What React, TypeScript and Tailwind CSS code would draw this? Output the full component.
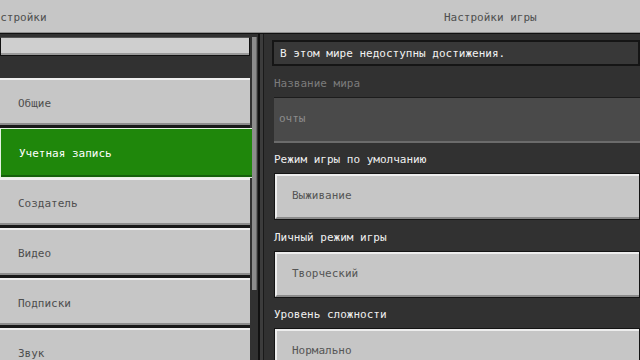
export default function App() {
  const items = ["Общие", "Учетная запись", "Создатель", "Видео", "Подписки", "Звук"];
  const active = "Учетная запись";

  return (
    <div className="w-[640px] h-[360px] overflow-hidden bg-[#313131] flex flex-col font-['DejaVu_Sans_Mono',monospace] text-[11px]">
      {/* Header */}
      <header className="h-[33px] shrink-0 bg-[#c6c6c6] border-b border-b-[#8f8f8f] flex items-center pt-[5px] text-[#4f4f4f]">
        <div className="w-[264px] shrink-0 overflow-hidden">
          <span className="block -ml-[13px]">Настройки</span>
        </div>
        <div className="flex-1 pl-[180px]">Настройки игры</div>
      </header>
      <div className="h-[1px] shrink-0 bg-[#111]" />

      <div className="flex flex-1 min-h-0">
        {/* Left panel */}
        <aside className="w-[258px] shrink-0 flex">
          <div className="w-[251px] shrink-0 flex flex-col pt-[3px]">
            <div className="h-[19px] w-[250px] shrink-0 bg-[#cfcfcf] border border-[#111] border-t-[#555] shadow-[inset_0_-2px_0_#9a9a9a]" />
            <div className="mt-[22px] shrink-0 flex flex-col">
              {items.map((label) =>
                label === active ? (
                  <div
                    key={label}
                    className="h-[50px] w-[253px] shrink-0 bg-[#1f870b] border border-[#e6f2e2] shadow-[inset_0_-2px_0_#14600a] flex items-center pl-[18px] pt-[2px] text-white"
                  >
                    {label}
                  </div>
                ) : (
                  <div
                    key={label}
                    className="h-[50px] w-[250px] shrink-0 bg-[#c6c6c6] border-t-2 border-t-[#efefef] border-b-[3px] border-b-[#181818] shadow-[inset_0_-2px_0_#8d8d8d] flex items-center pl-[18px] pt-[3px] text-[#4e4e4e]"
                  >
                    {label}
                  </div>
                )
              )}
            </div>
          </div>
          <div className="w-[7px] shrink-0 pt-[3px] pl-[1px]">
            <div className="h-[253px] w-[5px] bg-[#8c8c8c] shadow-[inset_-1px_0_0_#6a6a6a]" />
          </div>
        </aside>

        {/* Divider */}
        <div className="w-[6px] shrink-0 flex">
          <div className="w-[2px] bg-[#111]" />
          <div className="w-[3px] bg-[#3c3c3c]" />
          <div className="w-[1px] bg-[#1a1a1a]" />
        </div>

        {/* Right panel */}
        <main className="flex-1 min-w-0 flex flex-col pt-[6px] pl-[8px]">
          <div className="h-[26px] shrink-0 bg-[#383838] border-2 border-[#151515] flex items-center pl-[6px] pt-[2px] text-[#f2f2f2]">
            В этом мире недоступны достижения.
          </div>

          <div className="mt-[11px] h-[14px] shrink-0 pl-[2px] leading-[14px] text-[#7c7c7c]">Название мира</div>
          <div className="mt-[6px] ml-[2px] h-[46px] shrink-0 bg-[#4a4a4a] border-t border-t-[#1c1c1c] border-b-2 border-b-[#6b6b6b] flex items-center pl-[5px] text-[#8c8c8c]">
            очты
          </div>

          <div className="mt-[10px] h-[14px] shrink-0 pl-[2px] leading-[14px] text-[#f0f0f0]">Режим игры по умолчанию</div>
          <Dropdown value="Выживание" />

          <div className="mt-[11px] h-[14px] shrink-0 pl-[2px] leading-[14px] text-[#f0f0f0]">Личный режим игры</div>
          <Dropdown value="Творческий" />

          <div className="mt-[10px] h-[14px] shrink-0 pl-[2px] leading-[14px] text-[#f0f0f0]">Уровень сложности</div>
          <Dropdown value="Нормально" />
        </main>
      </div>
    </div>
  );
}

function Dropdown({ value }: { value: string }) {
  return (
    <div className="mt-[6px] ml-[2px] h-[47px] shrink-0 bg-[#141414] p-[1px]">
      <div className="h-full bg-[#c6c6c6] border-t-2 border-t-[#ededed] border-l-2 border-l-[#ededed] border-b-2 border-b-[#8b8b8b] flex items-center pl-[15px] text-[#555555]">
        {value}
      </div>
    </div>
  );
}
